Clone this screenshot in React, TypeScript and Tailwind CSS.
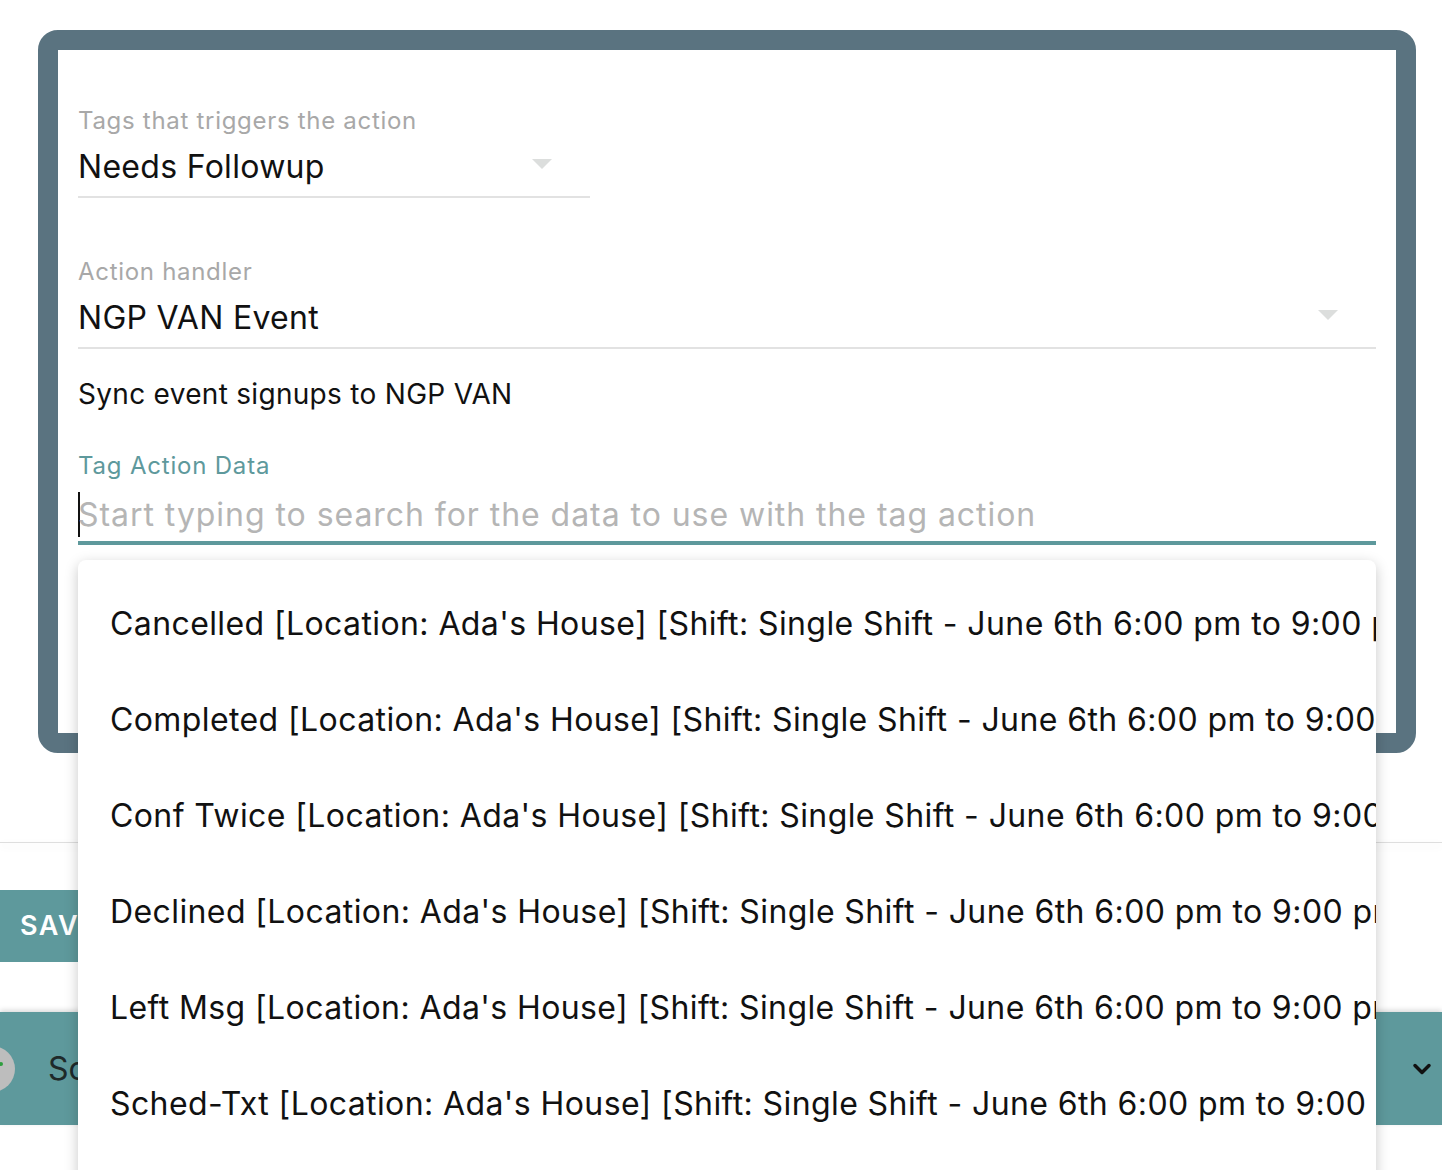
import { ChevronDown } from "lucide-react";

const items = ["Cancelled", "Completed", "Conf Twice", "Declined", "Left Msg", "Sched-Txt", "Scheduled"];
const detail = " [Location: Ada's House] [Shift: Single Shift - June 6th 6:00 pm to 9:00 pm]";

function SelectField({ label, value, width }: { label: string; value: string; width: string }) {
  return (
    <div className={width}>
      <div className="text-[24px] leading-[28px] text-[#a8a8a8] tracking-[0.7px]">{label}</div>
      <div className="mt-3 flex items-center justify-between border-b-2 border-[#e2e2e2] pb-[9px]">
        <span className="text-[32px] leading-[40px] text-[#111] tracking-[0.3px]">{value}</span>
        <span className="mr-[38px] mb-[6px] h-0 w-0 border-x-[10px] border-t-[10px] border-x-transparent border-t-[#dcdedd]" />
      </div>
    </div>
  );
}

export default function App() {
  return (
    <div className="relative h-[1170px] overflow-hidden bg-white" style={{ fontFamily: "Inter, 'Open Sans', sans-serif" }}>
      {/* form card */}
      <div className="ml-[38px] mt-[30px] h-[723px] w-[1378px] overflow-hidden rounded-[20px] border-[20px] border-[#5a7380] bg-white px-5 pt-[57px]">
        <SelectField label="Tags that triggers the action" value="Needs Followup" width="w-[512px]" />
        <div className="mt-[60px]">
          <SelectField label="Action handler" value="NGP VAN Event" width="w-full" />
        </div>
        <div className="mt-7 text-[28px] leading-[34px] text-[#111] tracking-[0.3px]">Sync event signups to NGP VAN</div>
        <div className="mt-[41px] text-[24px] leading-[28px] text-[#5e999c] tracking-[0.8px]">Tag Action Data</div>
        <div className="mt-3 flex items-center border-b-4 border-[#5e999c] pb-[4px]">
          <span className="h-[45px] w-[2px] bg-[#111]" />
          <span className="-ml-[2px] text-[32px] leading-[40px] text-[#b5b5b5] tracking-[0.95px]">
            Start typing to search for the data to use with the tag action
          </span>
        </div>
      </div>

      {/* page behind */}
      <div className="mt-[89px] h-px w-full bg-[#dedede] shadow-[0_3px_8px_rgba(0,0,0,0.12)]" />
      <div className="mt-[47px] flex h-[72px] w-[160px] items-center bg-[#5e999c] pl-5 text-[27px] font-semibold tracking-[1.5px] text-white">
        SAVE
      </div>
      <div className="mt-[50px] flex h-[113px] w-full items-center bg-[#5e999c] shadow-[0_-2px_5px_rgba(0,0,0,0.15)]">
        <div className="relative -ml-[31px] h-[46px] w-[46px] rounded-full bg-[#bdbdbd]">
          <span className="absolute right-[12px] top-[16px] h-[4px] w-[4px] rounded-full bg-[#2e9e3e]" />
        </div>
        <span className="ml-[33px] text-[32px] text-[#1f2a2a]">Scheduled</span>
        <ChevronDown className="ml-auto mr-[6px] h-[28px] w-[28px] text-[#111]" strokeWidth={3} />
      </div>

      {/* autocomplete menu */}
      <div className="absolute left-[78px] top-[560px] w-[1298px] overflow-hidden rounded-t-[8px] bg-white py-4 shadow-[0_4px_14px_rgba(0,0,0,0.22)]">
        {items.map((it) => (
          <div key={it} className="flex h-[96px] items-center overflow-hidden whitespace-nowrap pl-8 text-[32px] text-[#111] tracking-[0.4px]">
            {it}
            {detail}
          </div>
        ))}
      </div>
    </div>
  );
}
